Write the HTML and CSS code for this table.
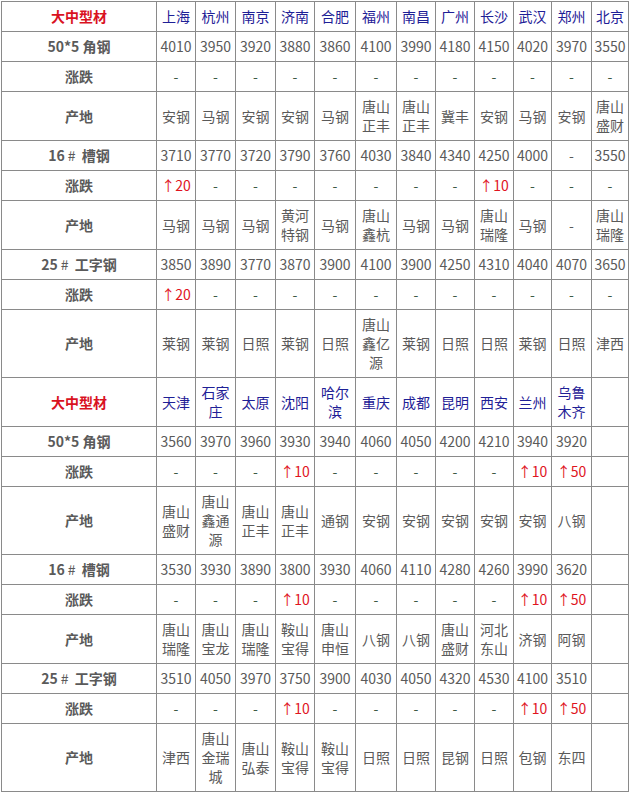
FILE: index.html
```html
<!DOCTYPE html>
<html lang="zh-CN">
<head>
<meta charset="utf-8">
<title>大中型材</title>
<link rel="stylesheet" href="styles.css">
</head>
<body>
<table class="grid">
<colgroup>
<col class="c-label"><col class="c39"><col class="c40"><col class="c40"><col class="c39"><col class="c41"><col class="c41"><col class="c39"><col class="c39"><col class="c39"><col class="c38"><col class="c40"><col class="c37">
</colgroup>
<tbody>
<tr class="head"><th class="title">大中型材</th><td>上海</td><td>杭州</td><td>南京</td><td>济南</td><td>合肥</td><td>福州</td><td>南昌</td><td>广州</td><td>长沙</td><td>武汉</td><td>郑州</td><td>北京</td></tr>
<tr><th>50*5 角钢</th><td>4010</td><td>3950</td><td>3920</td><td>3880</td><td>3860</td><td>4100</td><td>3990</td><td>4180</td><td>4150</td><td>4020</td><td>3970</td><td>3550</td></tr>
<tr><th>涨跌</th><td class="d">-</td><td class="d">-</td><td class="d">-</td><td class="d">-</td><td class="d">-</td><td class="d">-</td><td class="d">-</td><td class="d">-</td><td class="d">-</td><td class="d">-</td><td class="d">-</td><td class="d">-</td></tr>
<tr><th>产地</th><td>安钢</td><td>马钢</td><td>安钢</td><td>安钢</td><td>马钢</td><td>唐山正丰</td><td>唐山正丰</td><td>冀丰</td><td>安钢</td><td>马钢</td><td>安钢</td><td>唐山盛财</td></tr>
<tr><th>16<span class="hash">#</span> 槽钢</th><td>3710</td><td>3770</td><td>3720</td><td>3790</td><td>3760</td><td>4030</td><td>3840</td><td>4340</td><td>4250</td><td>4000</td><td>-</td><td>3550</td></tr>
<tr><th>涨跌</th><td class="up">↑20</td><td class="d">-</td><td class="d">-</td><td class="d">-</td><td class="d">-</td><td class="d">-</td><td class="d">-</td><td class="d">-</td><td class="up">↑10</td><td class="d">-</td><td class="d">-</td><td class="d">-</td></tr>
<tr><th>产地</th><td>马钢</td><td>马钢</td><td>马钢</td><td>黄河特钢</td><td>马钢</td><td>唐山鑫杭</td><td>马钢</td><td>马钢</td><td>唐山瑞隆</td><td>马钢</td><td>-</td><td>唐山瑞隆</td></tr>
<tr><th>25<span class="hash">#</span> 工字钢</th><td>3850</td><td>3890</td><td>3770</td><td>3870</td><td>3900</td><td>4100</td><td>3900</td><td>4250</td><td>4310</td><td>4040</td><td>4070</td><td>3650</td></tr>
<tr><th>涨跌</th><td class="up">↑20</td><td class="d">-</td><td class="d">-</td><td class="d">-</td><td class="d">-</td><td class="d">-</td><td class="d">-</td><td class="d">-</td><td class="d">-</td><td class="d">-</td><td class="d">-</td><td class="d">-</td></tr>
<tr><th>产地</th><td>莱钢</td><td>莱钢</td><td>日照</td><td>莱钢</td><td>日照</td><td>唐山鑫亿源</td><td>莱钢</td><td>日照</td><td>日照</td><td>莱钢</td><td>日照</td><td>津西</td></tr>

<tr class="head"><th class="title">大中型材</th><td>天津</td><td>石家庄</td><td>太原</td><td>沈阳</td><td>哈尔滨</td><td>重庆</td><td>成都</td><td>昆明</td><td>西安</td><td>兰州</td><td>乌鲁木齐</td><td></td></tr>
<tr><th>50*5 角钢</th><td>3560</td><td>3970</td><td>3960</td><td>3930</td><td>3940</td><td>4060</td><td>4050</td><td>4200</td><td>4210</td><td>3940</td><td>3920</td><td></td></tr>
<tr><th>涨跌</th><td class="d">-</td><td class="d">-</td><td class="d">-</td><td class="up">↑10</td><td class="d">-</td><td class="d">-</td><td class="d">-</td><td class="d">-</td><td class="d">-</td><td class="up">↑10</td><td class="up">↑50</td><td></td></tr>
<tr><th>产地</th><td>唐山盛财</td><td>唐山鑫通源</td><td>唐山正丰</td><td>唐山正丰</td><td>通钢</td><td>安钢</td><td>安钢</td><td>安钢</td><td>安钢</td><td>安钢</td><td>八钢</td><td></td></tr>
<tr><th>16<span class="hash">#</span> 槽钢</th><td>3530</td><td>3930</td><td>3890</td><td>3800</td><td>3930</td><td>4060</td><td>4110</td><td>4280</td><td>4260</td><td>3990</td><td>3620</td><td></td></tr>
<tr><th>涨跌</th><td class="d">-</td><td class="d">-</td><td class="d">-</td><td class="up">↑10</td><td class="d">-</td><td class="d">-</td><td class="d">-</td><td class="d">-</td><td class="d">-</td><td class="up">↑10</td><td class="up">↑50</td><td></td></tr>
<tr><th>产地</th><td>唐山瑞隆</td><td>唐山宝龙</td><td>唐山瑞隆</td><td>鞍山宝得</td><td>唐山申恒</td><td>八钢</td><td>八钢</td><td>唐山盛财</td><td>河北东山</td><td>济钢</td><td>阿钢</td><td></td></tr>
<tr><th>25<span class="hash">#</span> 工字钢</th><td>3510</td><td>4050</td><td>3970</td><td>3750</td><td>3900</td><td>4030</td><td>4050</td><td>4320</td><td>4530</td><td>4100</td><td>3510</td><td></td></tr>
<tr><th>涨跌</th><td class="d">-</td><td class="d">-</td><td class="d">-</td><td class="up">↑10</td><td class="d">-</td><td class="d">-</td><td class="d">-</td><td class="d">-</td><td class="d">-</td><td class="up">↑10</td><td class="up">↑50</td><td></td></tr>
<tr><th>产地</th><td>津西</td><td>唐山金瑞城</td><td>唐山弘泰</td><td>鞍山宝得</td><td>鞍山宝得</td><td>日照</td><td>日照</td><td>昆钢</td><td>日照</td><td>包钢</td><td>东四</td><td></td></tr>
</tbody>
</table>
</body>
</html>
```
FILE: styles.css
```css
html, body {
  margin: 0;
  padding: 0;
  background: #ffffff;
}
body {
  padding: 1px 0 0 1px;
  font-family: "Noto Sans CJK SC", "Noto Sans", sans-serif;
  font-size: 14px;
  color: #5a5a5a;
}
.grid {
  border-collapse: collapse;
  table-layout: fixed;
  width: 627px;
}
.c-label { width: 155px; }
.c37 { width: 37px; }
.c38 { width: 38px; }
.c39 { width: 39px; }
.c40 { width: 40px; }
.c41 { width: 41px; }
.grid th,
.grid td {
  border: 1px solid #8a8a8a;
  padding: 5px 0;
  line-height: 19px;
  text-align: center;
  vertical-align: middle;
  font-weight: normal;
  word-break: break-all;
}
.grid th {
  font-weight: bold;
  color: #5a5a5a;
}
.grid th.title {
  color: #d9121f;
}
.head td {
  color: #1e2096;
}
.hash {
  font-weight: normal;
  padding: 0 3px 0 3px;
}
.d {
  color: #3d5a44;
}
.up {
  color: #e0141e;
  white-space: nowrap;
}
```
